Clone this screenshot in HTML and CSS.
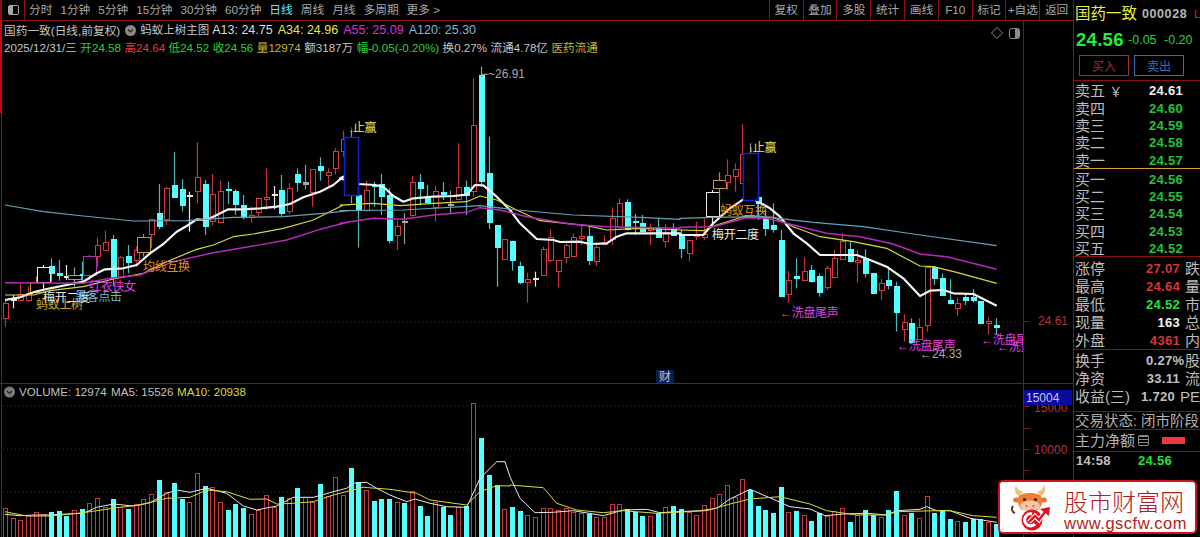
FILE: index.html
```html
<!DOCTYPE html>
<html lang="zh-CN">
<head>
    <meta charset="UTF-8">
    <meta name="viewport" content="width=device-width, initial-scale=1.0">
    <title>国药一致 000028</title>
    <link rel="stylesheet" href="styles.css">
</head>
<body>
    <div class="main">
        <header class="toolbar">
            <button class="panel-toggle"><span class="panel-icon"></span></button>
            <nav class="periods">
                <a>分时</a><a>1分钟</a><a>5分钟</a><a>15分钟</a><a>30分钟</a><a>60分钟</a><a class="active">日线</a><a>周线</a><a>月线</a><a>多周期</a><a>更多 &gt;</a>
            </nav>
            <div class="tools">
                <a>复权</a><a>叠加</a><a>多股</a><a>统计</a><a>画线</a><a>F10</a><a>标记</a><a>+自选</a><a>返回</a>
            </div>
        </header>

        <div class="chart">
            <svg class="chart-svg" width="1073" height="516" viewBox="0 21 1073 516">
                <!-- grid and axis -->
                <line class="grid-dot" x1="3" y1="322" x2="1023" y2="322"></line>
                <line class="grid-dot" x1="3" y1="406" x2="1023" y2="406"></line>
                <line class="grid-dot" x1="3" y1="449" x2="1023" y2="449"></line>
                <line class="grid-dot" x1="3" y1="492" x2="1023" y2="492"></line>
                <rect class="edge-thick" x="0" y="21" width="2" height="92"></rect>
                <line class="frame" x1="1.5" y1="113" x2="1.5" y2="537"></line>
                <line class="frame" x1="1023.5" y1="21" x2="1023.5" y2="537"></line>
                <line class="frame" x1="0" y1="383.5" x2="1073" y2="383.5"></line>
                <g id="axis-ticks"></g>

                <g id="candles"></g>
                <g id="lines"></g>
                <g id="volume"></g>

                <!-- signal boxes -->
                <rect class="signal-box" x="344.5" y="137.5" width="14" height="58"></rect>
                <rect class="signal-box" x="743.5" y="153.5" width="15" height="47"></rect>

                <!-- chart labels -->
                <clipPath id="pane-clip"><rect x="0" y="21" width="1023" height="516"></rect></clipPath>
                <g class="labels">
                    <text class="c-gold" x="36" y="308.5">蚂蚁上树</text>
                    <text class="c-white" x="43" y="301.5">梅开二度</text>
                    <text class="c-sky" x="75" y="300.5">黑客点击</text>
                    <text class="c-pink" x="89" y="290.5">红衣侠女</text>
                    <text class="c-orange" x="143" y="270.5">均线互换</text>
                    <text class="c-yellow" x="349" y="131.5"><tspan class="arrow">↓</tspan>止赢</text>
                    <text class="c-yellow" x="749" y="151.5"><tspan class="arrow">↓</tspan>止赢</text>
                    <text class="c-orange" x="720" y="214.5">蚂蚁互换</text>
                    <text class="c-white" x="712" y="238.5">梅开二度</text>
                    <text class="c-pink" x="780" y="316.5">←洗盘尾声</text>
                    <text class="c-pink" x="897" y="349.5">←洗盘尾声</text>
                    <g clip-path="url(#pane-clip)">
                        <text class="c-pink" x="981" y="343.5">←洗盘尾声</text>
                        <text class="c-pink" x="997" y="350.5">←洗盘尾声</text>
                    </g>
                    <text class="c-grey num" x="481" y="78">⌐~26.91</text>
                    <text class="c-grey num" x="920" y="358">←24.33</text>
                </g>

                <rect class="cai-bg" x="656" y="370" width="18" height="13"></rect>
                <text class="cai" x="659" y="381">财</text>

                <!-- axis labels -->
                <text class="axis-label" x="1038" y="325">24.61</text>
                <text class="axis-label" x="1034" y="454">10000</text>
                <text class="axis-label" x="1034" y="412">15000</text>
                <rect class="axis-box" x="1024" y="390" width="48" height="15"></rect>
                <text class="axis-box-text" x="1026" y="402">15004</text>

                <!-- pane icons -->
                <path class="pane-icon" d="M997 27.5l5.5 5.5-5.5 5.5-5.5-5.5z"></path>
                <rect class="pane-icon" x="1009.5" y="28.5" width="10" height="10" rx="2"></rect>
                <rect class="pane-fill" x="1015" y="29" width="4" height="9"></rect>

                <!-- volume legend -->
                <circle class="legend-dot" cx="9.5" cy="392" r="5.5"></circle>
                <path class="legend-chev" d="M7 391l2.5 2.5 2.5-2.5"></path>
                <text class="legend" x="19" y="396">VOLUME: 12974</text>
                <text class="legend" x="111" y="396">MA5: 15526</text>
                <text class="legend legend-ma10" x="177" y="396">MA10: 20938</text>
            </svg>

            <div class="quote-info">
                <div class="info-line">
                    <span>国药一致(日线,前复权)</span>
                    <span class="dropdown"><svg width="11" height="11" viewBox="0 0 11 11"><circle cx="5.5" cy="5.5" r="5.5" fill="#8a8a8a"></circle><path d="M3 4.5l2.5 2.5 2.5-2.5" fill="none" stroke="#222" stroke-width="1.2"></path></svg></span>
                    <span class="study">蚂蚁上树主图</span>
                    <span class="ma c-white">A13: 24.75</span>
                    <span class="ma c-yellow">A34: 24.96</span>
                    <span class="ma c-pink">A55: 25.09</span>
                    <span class="ma c-sky">A120: 25.30</span>
                </div>
                <div class="info-line second">
                    <span>2025/12/31/三</span>
                    <span class="up">开<b class="down">24.58</b></span>
                    <span class="red">高24.64</span>
                    <span class="down">低24.52</span>
                    <span class="down">收24.56</span>
                    <span class="c-gold2">量12974</span>
                    <span>额3187万</span>
                    <span class="down">幅-0.05(-0.20%)</span>
                    <span>换0.27%</span>
                    <span>流通4.78亿</span>
                    <span class="c-gold2">医药流通</span>
                </div>
            </div>
        </div>
    </div>

    <aside class="side">
        <div class="stock-name">
            <span class="name">国药一致</span><span class="code">000028</span><span class="flag">L</span>
        </div>
        <div class="stock-price">
            <span class="last">24.56</span><span class="chg">-0.05</span><span class="chg">-0.20</span>
        </div>
        <div class="trade-btns">
            <button class="btn-buy">买入</button><button class="btn-sell">卖出</button><button class="btn-more"></button>
        </div>

        <ul class="book asks">
            <li><span>卖五 <em>￥</em></span><b class="white">24.61</b></li>
            <li><span>卖四</span><b class="green">24.60</b></li>
            <li><span>卖三</span><b class="green">24.59</b></li>
            <li><span>卖二</span><b class="green">24.58</b></li>
            <li><span>卖一</span><b class="green">24.57</b></li>
        </ul>
        <ul class="book bids">
            <li><span>买一</span><b class="green">24.56</b></li>
            <li><span>买二</span><b class="green">24.55</b></li>
            <li><span>买三</span><b class="green">24.54</b></li>
            <li><span>买四</span><b class="green">24.53</b></li>
            <li><span>买五</span><b class="green">24.52</b></li>
        </ul>

        <ul class="stats stats-a">
            <li><span>涨停</span><b class="redv">27.07</b><i>跌</i></li>
            <li><span>最高</span><b class="redv">24.64</b><i>量</i></li>
            <li><span>最低</span><b class="green2">24.52</b><i>市</i></li>
            <li><span>现量</span><b class="white">163</b><i>总</i></li>
            <li><span>外盘</span><b class="redv">4361</b><i>内</i></li>
        </ul>
        <ul class="stats stats-b">
            <li><span>换手</span><b class="lite">0.27%</b><i>股</i></li>
            <li><span>净资</span><b class="lite">33.11</b><i>流</i></li>
            <li><span>收益(三)</span><b class="lite">1.720</b><i>PE</i></li>
        </ul>

        <div class="trade-state">交易状态: 闭市阶段</div>
        <div class="main-flow">
            <span>主力净额</span><span class="flow-icon"></span><span class="flow-bar"></span>
        </div>
        <ul class="ticks">
            <li><b>14:58</b><b class="green2">24.56</b></li>
        </ul>
    </aside>

    <a class="site-logo">
        <svg class="bull" width="42" height="48" viewBox="0 0 42 48">
            <path d="M3 23c-2 3-1 6 2 7" fill="none" stroke="#5a3420" stroke-width="2"></path>
            <path d="M9 13C5 11 4 6 6 2c1 4 4 6 7 7z" fill="#e9c27e"></path>
            <path d="M31 13c4-2 5-7 3-11-1 4-4 6-7 7z" fill="#e9c27e"></path>
            <ellipse cx="6.5" cy="17" rx="3.5" ry="2.5" fill="#e8752d"></ellipse>
            <ellipse cx="33.5" cy="17" rx="3.5" ry="2.5" fill="#e8752d"></ellipse>
            <path d="M9 13c3-4 19-4 22 0 2 4 1 11-3 14H12C8 24 7 17 9 13z" fill="#ee7f35"></path>
            <ellipse cx="20" cy="23" rx="10" ry="5.5" fill="#f8c4a8"></ellipse>
            <circle cx="14.5" cy="16.5" r="1.6" fill="#33211a"></circle>
            <circle cx="25.5" cy="16.5" r="1.6" fill="#33211a"></circle>
            <circle cx="16.5" cy="23" r="1" fill="#c0563a"></circle>
            <circle cx="23.5" cy="23" r="1" fill="#c0563a"></circle>
            <circle cx="22" cy="37" r="10.5" fill="#e0141f"></circle>
            <path d="M22 31a6 6 0 1 0 3 10" fill="none" stroke="#fff" stroke-width="3"></path>
            <path d="M19 39l6-6 4 4 6-8" fill="none" stroke="#fff" stroke-width="4.5"></path>
            <path d="M19 39l6-6 4 4 6-8" fill="none" stroke="#e0141f" stroke-width="2.4"></path>
            <path d="M30 26l10-2-1 9z" fill="#e0141f"></path>
        </svg>
        <span class="logo-text">
            <span class="logo-cn">股市财富网</span>
            <span class="logo-url">www.gscfw.com</span>
        </span>
    </a>

    <script src="script.js"></script>
</body>
</html>
```

FILE: styles.css
```css
:root {
  --frame: #8c0f14;
  --text: #c4c4c4;
  --cyan: #54ffff;
  --red: #e0333a;
  --green: #22d63a;
}

* {
  box-sizing: border-box;
  margin: 0;
  padding: 0;
}

html, body {
  width: 1200px;
  height: 537px;
  overflow: hidden;
  background: #000;
}

body {
  display: flex;
  color: var(--text);
  font-family: "Liberation Sans", "Noto Sans CJK SC", sans-serif;
  font-size: 11.7px;
  line-height: 1;
}

ul {
  list-style: none;
}

button {
  background: none;
  font-family: inherit;
}

/* Main column */
.main {
  width: 1073px;
  display: flex;
  flex-direction: column;
}

.toolbar {
  height: 21px;
  display: flex;
  align-items: center;
  border-bottom: 1px solid var(--frame);
}

.panel-toggle {
  width: 25px;
  height: 20px;
  border: 0;
  border-left: 2px solid var(--frame);
  border-right: 1px solid var(--frame);
  display: flex;
  align-items: center;
  justify-content: center;
}

.panel-icon {
  width: 11px;
  height: 10px;
  border: 1px solid #aaa;
  border-radius: 2px;
  background: linear-gradient(90deg, #aaa 0 45%, transparent 45%);
}

.periods {
  flex: 1;
  display: flex;
  gap: 8px;
  padding-left: 4px;
  color: #a8a8a8;
}

.periods a.active {
  color: #66e8ee;
}

.tools {
  display: flex;
  height: 20px;
}

.tools a {
  width: 33.8px;
  display: flex;
  align-items: center;
  justify-content: center;
  border-left: 1px solid var(--frame);
  color: #a8a8a8;
  white-space: nowrap;
}

/* Chart pane */
.chart {
  position: relative;
  flex: 1;
}

.chart-svg {
  display: block;
}

.quote-info {
  position: absolute;
  top: 2px;
  left: 4px;
  color: #c4c4c4;
}

.info-line {
  display: flex;
  align-items: center;
  gap: 5px;
  height: 15px;
}

.info-line .study {
  font-size: 11.5px;
  margin-left: -1px;
  margin-right: -2px;
}

.info-line.second {
  margin-top: 2px;
  gap: 3.5px;
  font-size: 11.6px;
}

.info-line.second .up b {
  font-weight: normal;
}

.dropdown {
  display: flex;
}

.ma {
  font-size: 12.5px;
}

.up { color: var(--green); }
.down { color: var(--green); }
.red { color: #e8383c; }
.c-white { color: #dcdcdc; fill: #e8e8e8; }
.c-yellow { color: #e6e64a; fill: #e6e64a; }
.c-pink { color: #d92ed9; fill: #e040e0; }
.c-sky { color: #78b8dc; fill: #72b8cc; }
.c-gold { fill: #c8a030; }
.c-gold2 { color: #c8b428; }
.c-orange { fill: #e0901e; }
.c-grey { fill: #a8a8a8; }

.grid-dot {
  stroke: #7a1414;
  stroke-width: 1;
  stroke-dasharray: 1 3;
}

.frame {
  stroke: var(--frame);
  stroke-width: 1;
}

.edge-thick {
  fill: #c4090f;
}

.axis-tick {
  stroke: var(--frame);
  stroke-width: 1;
}

.labels text {
  font-size: 12px;
  letter-spacing: -0.3px;
}

.labels .arrow {
  font-size: 8px;
}

.labels text.num {
  font-size: 12px;
  letter-spacing: 0;
}

.signal-box {
  fill: #000;
  stroke: #1420d8;
  stroke-width: 1.5;
}

.cai-bg {
  fill: #0a1e50;
}

.cai {
  fill: #a8c8ee;
  font-size: 12px;
}

.axis-label {
  fill: #b03438;
  font-size: 12px;
}

.axis-box {
  fill: #0a0a9c;
}

.axis-box-text {
  fill: #c4c8ee;
  font-size: 12px;
}

.pane-icon {
  fill: none;
  stroke: #8a8a8a;
  stroke-width: 1;
}

.pane-fill {
  fill: #8a8a8a;
}

.legend-dot {
  fill: #7a7a7a;
}

.legend-chev {
  fill: none;
  stroke: #222;
  stroke-width: 1.2;
}

.legend {
  fill: #c0c0c0;
  font-size: 11.6px;
}

.legend-ma10 {
  fill: #d8d83a;
}

/* Right panel */
.side {
  width: 127px;
  border-left: 1px solid var(--frame);
  overflow: hidden;
  display: flex;
  flex-direction: column;
  flex-shrink: 0;
}

.stock-name {
  height: 28px;
  display: flex;
  align-items: center;
  padding-left: 1px;
  white-space: nowrap;
}

.name {
  color: #ecec3e;
  font-size: 15.5px;
  width: 67px;
}

.code {
  font-weight: bold;
  font-size: 12.5px;
  letter-spacing: 0.6px;
  color: #b8b8b8;
  width: 52px;
}

.flag {
  color: #c43a3a;
  font-size: 11px;
}

.stock-price {
  height: 24px;
  display: flex;
  align-items: center;
  padding-left: 2px;
  white-space: nowrap;
}

.last {
  color: #1ef03c;
  font-weight: bold;
  font-size: 18.5px;
  letter-spacing: 0.3px;
  width: 55px;
}

.chg {
  color: #22d63a;
  font-size: 12.5px;
  width: 38px;
}

.trade-btns {
  height: 29px;
  padding: 3px 0 5px 5px;
  display: flex;
  gap: 5px;
  border-bottom: 1px solid var(--frame);
  white-space: nowrap;
}

.trade-btns button {
  width: 50px;
  flex-shrink: 0;
  height: 21px;
  font-size: 12px;
  border: 1px solid;
}

.btn-buy {
  color: #b02a30;
  border-color: #a82a30;
}

.btn-sell {
  color: #3a6ab8;
  border-color: #2a62a8;
}

.btn-more {
  border-color: #8a8a8a;
}

.book {
  padding-top: 1px;
}

.book li, .stats li, .ticks li {
  display: flex;
  align-items: center;
  white-space: nowrap;
}

.book li {
  height: 17.4px;
}

.book span, .stats span {
  width: 75px;
  padding-left: 1px;
  font-size: 15px;
  color: #bcbcbc;
}

.book em {
  font-style: normal;
  font-size: 13px;
}

.book b, .stats b {
  width: 34px;
  font-size: 13px;
  letter-spacing: 0.3px;
  text-align: right;
}

.asks {
  height: 87.5px;
  border-bottom: 1px solid #d89a3a;
}

.bids {
  padding-top: 2px;
  height: 88.5px;
  border-bottom: 1px solid var(--frame);
}

.white { color: #f0f0f0; }
.green { color: #22c43a; }
.green2 { color: #22e23a; }
.redv { color: #d8343a; }
.lite { color: #c0c0c0; }

.stats {
  border-bottom: 1px solid var(--frame);
}

.stats li {
  height: 18.2px;
}

.stats i {
  font-style: normal;
  font-size: 15px;
  margin-left: 5px;
  color: #bcbcbc;
}

.stats-a {
  height: 93px;
  padding-top: 2px;
}

.stats-b {
  height: 62px;
  padding-top: 1px;
}

.trade-state {
  height: 18px;
  padding: 1px 0 0 1px;
  font-size: 14.5px;
  color: #b0b0b0;
  border-bottom: 1px solid var(--frame);
  white-space: nowrap;
  display: flex;
  align-items: center;
}

.main-flow {
  height: 22px;
  display: flex;
  align-items: center;
  padding-left: 1px;
  font-size: 15px;
  color: #b0b0b0;
  border-bottom: 1px solid var(--frame);
}

.flow-icon {
  width: 11px;
  height: 11px;
  margin-left: 3px;
  border: 1px solid #8a8a8a;
  border-radius: 2px;
  background: repeating-linear-gradient(#8a8a8a 0 1px, transparent 1px 3px);
}

.flow-bar {
  width: 23px;
  height: 7px;
  margin-left: 13px;
  background: #f0383c;
}

.ticks li {
  height: 17px;
  padding-left: 2px;
}

.ticks b {
  font-size: 13px;
  letter-spacing: 0.3px;
  color: #c0c0c0;
  width: 73px;
}

.ticks b.green2 {
  color: #22e23a;
}

/* Watermark */
.site-logo {
  position: absolute;
  left: 998px;
  top: 480px;
  width: 199px;
  height: 54px;
  background: #fff;
  border: 2px solid #d0101c;
  border-radius: 5px;
  display: flex;
  align-items: center;
}

.bull {
  margin-left: 10px;
  flex-shrink: 0;
}

.logo-text {
  margin-left: 12px;
  padding-top: 6px;
  display: flex;
  flex-direction: column;
  gap: 0;
}

.logo-cn {
  color: #b81a20;
  font-size: 24px;
  line-height: 26px;
  font-weight: 300;
  margin-bottom: -1px;
}

.logo-url {
  color: #b81a20;
  font-size: 16.5px;
  line-height: 16px;
  letter-spacing: 0.5px;
}
```

FILE: script.js
```js
// y values are read from a 3x view of the chart: real y = base + v / 3
// candle row: colour, high, body top, body bottom, low
// r red, c cyan, w white, g gold, p purple, s grey, d doji grey
const SVG_NS = 'http://www.w3.org/2000/svg';
const STEP = 7.68;

const candles = [
  ['r',720,728,772,800],['w',705,718,720,745],['r',670,703,722,722],['r',680,700,722,725],['g',650,665,695,700],
  ['w',615,620,665,685],['c',595,618,638,665],['c',600,638,645,662],['w',615,647,649,660],['s',622,645,657,680],
  ['c',605,642,645,665],['p',585,588,645,660],['r',533,556,590,620],['r',512,545,568,570],['c',525,538,652,680],
  ['r',588,590,650,655],['c',555,588,606,640],['r',560,570,600,620],['g',522,530,575,590],['r',478,478,522,565],
  ['c',372,458,497,508],['r',380,385,477,495],['c',276,375,410,410],['c',358,388,437,455],['w',395,404,406,515],
  ['r',247,352,395,430],['c',360,373,500,525],['r',342,403,483,497],['r',362,392,485,490],['c',365,387,389,432],
  ['c',388,393,433,465],['c',405,435,472,478],['r',440,465,472,488],['r',415,415,458,470],['r',325,412,419,450],
  ['w',378,402,404,448],['c',345,390,460,472],['r',370,385,455,462],['c',325,342,366,395],['d',315,366,372,388],
  ['r',328,328,398,440],['c',292,318,329,362],['r',325,337,346,380],['r',265,273,323,343],['r',212,238,275,290],
  ['d',212,300,300,430],['c',348,405,450,563],['r',362,390,450,455],['c',365,374,377,440],['c',342,373,410,465],
  ['c',385,405,540,550],['r',482,497,525,570],['d',460,482,484,552],['r',348,365,465,470],['c',342,367,385,435],
  ['c',375,415,428,430],['r',377,393,440,485],['c',367,397,404,420],['d',392,431,433,460],['r',250,382,418,420],
  ['c',362,380,405,465],['r',55,196,395,410],['c',20,45,362,380],['c',230,340,487,507],['c',495,495,560,680],
  ['r',538,538,598,600],['c',542,542,600,632],['c',605,618,665,672],['r',638,658,666,728],['w',635,654,656,680],
  ['r',560,567,645,648],['r',508,530,598,607],['r',600,600,632,682],['r',548,555,592,610],['r',520,532,590,590],
  ['r',498,527,532,555],['c',500,527,600,615],['r',555,562,603,618],['r',525,545,550,552],['r',442,473,537,555],
  ['r',415,428,500,505],['c',418,427,507,512],['c',462,482,484,525],['c',465,490,515,518],['r',490,500,510,555],
  ['c',475,505,532,532],['r',492,515,542,563],['c',490,508,525,525]
];

// the rest of the candles come from a view offset by 50px
const candlesRight = [
  ['c',358,375,415,445],['r',390,390,430,455],['r',335,372,378,390],['r',325,372,380,390],['w',240,245,318,345],
  ['g',187,210,233,270],['r',148,196,217,240],['r',160,178,198,245],['r',42,132,220,222],['d',100,130,130,268],
  ['c',200,262,280,330],['c',300,323,352,378],['c',280,345,358,368],['c',360,390,557,562],['r',483,510,553,578],
  ['c',445,498,505,535],['r',442,482,508,508],['c',465,480,512,518],['c',490,497,545,560],['r',467,475,532,540],
  ['r',420,443,500,500],['r',370,393,448,450],['c',395,418,455,457],['r',420,451,458,518],['c',418,445,490,502],
  ['c',488,488,548,550],['r',507,518,540,570],['c',470,510,525,538],['c',515,527,605,665],['r',613,635,655,695],
  ['c',625,640,698,700],['r',625,652,688,690],['r',470,470,645,665],['c',468,470,502,525],['c',490,503,553,558],
  ['c',508,570,580,583],['r',562,578,593,617],['c',555,562,570,585],['c',537,560,570,578],['c',573,573,638,642],
  ['r',622,633,640,673],['c',625,645,650,675]
];

// bar colour + top, from the volume pane (y = 380 + v / 3)
const volumes = [
  'r385','r413','r420','r405','r397','r403','c397','c393','c407','r390','c388','r370','r353','r380','c356','r382',
  'c388','r373','r358','r342','c300','r337','c310','c358','r365','r278','c318','r322','r367','c390','c372','c384',
  'r402','r390','r345','r380','c352','r353','c324','r352','r367','c312','r348','r292','r345','c264','c307','r330',
  'c364','c356','c358','r365','c370','r333','c378','c407','r365','c380','c405','r382','c378','r68','c174','c284',
  'c316','r388','c381','c393','r405','r411','r385','r385','r390','r383','r395','r400','c402','r411','r410','r373',
  'r373','c387','c395','c407','r408','c400','r382','c378','c387','r397','r405','r376','r355','r342','r315','r350',
  'r297','c330','c378','c390','c399','c321','r397','c393','r405','c422','c400','r408','r393','r385','c425','r405',
  'c391','c405','r411','c390','c333','r405','c398','r413','r348','c398','c393','c416','r423','c425','c418','c417',
  'r425','c432'
];

// polylines as [x0, y0, [zoomed x, zoomed y, ...]] per view
const views = {
  left: [0, 60],
  mid: [340, 60],
  right: [680, 110],
  volLeft: [0, 380],
  volRight: [510, 380]
};

const priceLines = [
  { color: '#f4f4f4', width: 2.2, parts: [
    ['left', [15,720,60,712,105,695,150,685,200,675,250,665,290,640,315,628,370,625,410,615,450,580,490,552,530,515,560,498,590,478,620,480,650,465,685,448,730,448,780,445,830,440,870,432,910,412,960,395,1000,375,1030,350]],
    ['mid', [0,355,55,372,105,375,130,380,160,408,190,425,220,415,280,410,340,408,380,404,405,375,430,376,470,410,510,450,540,490,590,537,640,540,660,546,720,545,750,552,800,550,830,530,860,520,1020,520]],
    ['right', [0,375,70,375,100,340,150,295,190,268,225,270,270,295,300,320,340,370,380,400,420,435,480,435,530,435,570,450,620,470,670,505,720,558,750,542,790,540,820,550,880,552,950,587]]
  ]},
  { color: '#d8d838', width: 1.2, parts: [
    ['left', [15,705,100,705,150,692,250,680,340,657,430,640,500,605,590,568,640,555,700,530,760,522,850,505,940,480,1000,450,1030,435,1050,435]],
    ['mid', [0,435,100,430,180,437,280,430,380,425,420,408,470,420,530,450,600,482,650,487,740,497,800,510,900,505,1020,510]],
    ['right', [0,360,70,362,110,345,190,320,280,322,340,350,420,380,520,395,620,415,720,468,760,470,830,487,950,520]]
  ]},
  { color: '#b82ab8', width: 1.4, parts: [
    ['left', [15,668,250,670,330,655,420,645,520,605,640,578,760,558,860,540,960,508,1050,485]],
    ['mid', [0,490,100,475,190,478,280,465,380,457,420,443,480,450,560,470,690,492,800,500,1020,505]],
    ['right', [0,352,100,350,200,323,260,325,340,345,440,370,540,380,640,402,720,432,800,440,950,478]]
  ]},
  { color: '#6a9eb8', width: 1.2, parts: [
    ['left', [15,435,130,455,250,468,400,483,560,482,700,472,850,470,970,460,1050,452]],
    ['mid', [0,452,190,450,420,437,530,450,700,465,900,472,1020,478]],
    ['right', [0,325,100,322,250,320,400,337,550,350,700,372,950,407]]
  ]}
];

const volumeLines = [
  { color: '#e8e8e8', width: 1, parts: [
    ['volLeft', [15,403,60,407,105,405,150,405,200,402,250,400,290,382,340,372,400,378,450,368,500,340,530,330,570,337,620,325,680,340,730,378,770,390,830,378,880,352,940,352,1000,335,1040,325,1060,310,1100,307,1130,325,1170,345,1220,365,1245,357,1290,370,1340,380,1400,382,1440,295,1490,245,1515,245]],
    ['volRight', [0,290,30,355,75,398,130,397,190,392,280,407,340,390,410,388,450,398,500,395,570,392,620,385,660,357,720,328,760,345,800,362,840,380,900,387,945,407,1000,402,1070,400,1130,405,1160,392,1230,388,1250,380,1280,392,1320,392,1380,415,1430,422,1460,427]]
  ]},
  { color: '#dcdc32', width: 1, parts: [
    ['volLeft', [15,395,80,408,150,408,250,398,350,383,420,375,500,355,570,352,620,330,680,335,750,358,800,357,830,372,880,370,940,365,1000,345,1090,322,1170,328,1250,340,1290,360,1400,375,1440,335,1490,317,1530,318]],
    ['volRight', [0,315,100,323,140,370,200,390,280,398,340,392,440,400,590,392,660,372,720,357,810,350,900,372,950,392,1040,405,1130,405,1160,395,1280,392,1320,392,1390,407,1460,412]]
  ]}
];

function el(tag, attrs, parent) {
  const node = document.createElementNS(SVG_NS, tag);
  Object.keys(attrs).forEach(function(key) {
    node.setAttribute(key, attrs[key]);
  });
  parent.appendChild(node);
  return node;
}

function toPoints(parts) {
  const points = [];
  parts.forEach(function(part) {
    const view = views[part[0]];
    const raw = part[1];
    for (let i = 0; i < raw.length; i += 2) {
      points.push((view[0] + raw[i] / 3).toFixed(1) + ',' + (view[1] + raw[i + 1] / 3).toFixed(1));
    }
  });
  return points.join(' ');
}

function snap(v) {
  return Math.round(v) + 0.5;
}

const candleColors = {
  r: { wick: '#c4343a', line: '#d8383e', fill: '#000' },
  c: { wick: '#50b8b8', line: '#54ffff', fill: '#54ffff' },
  w: { wick: '#e8e8e8', line: '#e8e8e8', fill: '#000', wide: true },
  g: { wick: '#b89030', line: '#c09a38', fill: '#000', wide: true },
  p: { wick: '#b030b0', line: '#b030b0', fill: '#000', wide: true },
  s: { wick: '#8aa0a8', line: '#8aa0a8', fill: '#000', wide: true },
  d: { wick: '#909a9a', line: '#a8a8a8', fill: '#a8a8a8' }
};

function drawCandles() {
  const group = document.getElementById('candles');
  const all = candles.map(function(row) {
    return { row: row, base: 60 };
  }).concat(candlesRight.map(function(row) {
    return { row: row, base: 110 };
  }));

  all.forEach(function(item, i) {
    const row = item.row;
    const color = candleColors[row[0]];
    const x = Math.round(5 + STEP * i);
    const y = function(v) { return item.base + v / 3; };

    el('line', {
      x1: x + 0.5, x2: x + 0.5, y1: y(row[1]), y2: y(row[4]),
      stroke: color.wick, 'stroke-width': 1.2
    }, group);

    const top = snap(y(row[2]));
    const height = Math.max(Math.round(y(row[3]) - y(row[2])), 1);
    // signal candles are drawn as a wider hollow box
    const half = color.wide && height > 3 ? 6 : 2;
    el('rect', {
      x: x - half, y: top, width: half * 2 + 1, height: height,
      fill: color.fill, stroke: color.line, 'stroke-width': 1, 'shape-rendering': 'crispEdges'
    }, group);
  });
}

function drawLines(list, group) {
  list.forEach(function(line) {
    el('polyline', {
      points: toPoints(line.parts),
      fill: 'none', stroke: line.color, 'stroke-width': line.width, 'stroke-linejoin': 'round'
    }, group);
  });
}

function drawVolume() {
  const group = document.getElementById('volume');
  volumes.forEach(function(code, i) {
    const isUp = code[0] === 'r';
    const top = Math.round(380 + Number(code.slice(1)) / 3);
    const x = Math.round(5 + STEP * i);
    el('rect', {
      x: x - 2, y: top + 0.5, width: 4, height: 537 - top,
      fill: isUp ? '#000' : '#54ffff',
      stroke: isUp ? '#c8383e' : '#54ffff',
      'shape-rendering': 'crispEdges'
    }, group);
  });
  drawLines(volumeLines, group);
}

function drawAxisTicks() {
  const group = document.getElementById('axis-ticks');
  [321, 406, 449, 492, 428, 470].forEach(function(y) {
    el('line', { class: 'axis-tick', x1: 1024, x2: 1030, y1: y + 0.5, y2: y + 0.5 }, group);
  });
}

drawAxisTicks();
drawCandles();
drawLines(priceLines, document.getElementById('lines'));
drawVolume();
```
